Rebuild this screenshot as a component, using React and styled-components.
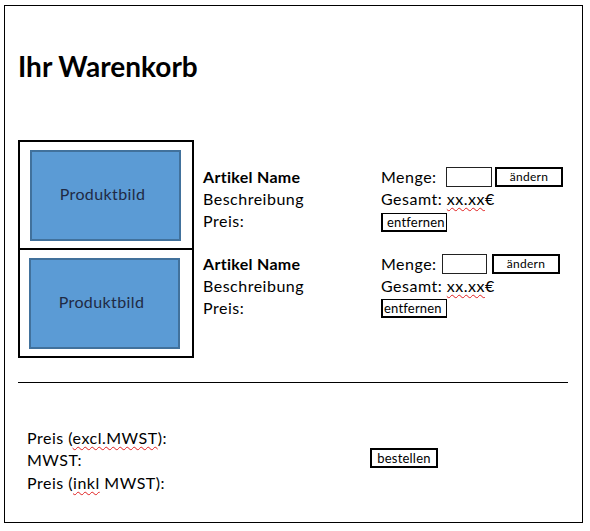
import React from "react";
import styled, { createGlobalStyle } from "styled-components";

const GlobalStyle = createGlobalStyle`
  body {
    margin: 0;
    background: #fff;
    font-family: "Lato", "Liberation Sans", sans-serif;
    color: #000;
  }
`;

const Page = styled.div`
  padding: 5px 0 0 4px;
`;

const Frame = styled.div`
  box-sizing: border-box;
  width: 579px;
  height: 518px;
  border: 1px solid #000;
  padding: 0 14px 0 13px;
`;

const Title = styled.h1`
  margin: 44px 0 0;
  font-size: 28px;
  line-height: 1.2;
  font-weight: 700;
`;

const CartSection = styled.div`
  display: flex;
  margin-top: 56px;
`;

const ImageStack = styled.div`
  box-sizing: border-box;
  width: 176px;
  border: 2px solid #000;
`;

const ImageCell = styled.div`
  padding: 8px 10px 7px;
  & + & {
    border-top: 2px solid #000;
    padding-left: 9px;
  }
`;

const ProductImage = styled.div`
  box-sizing: border-box;
  width: 151px;
  height: 91px;
  padding: 0 6px 4px 0;
  background: #5b9bd5;
  border: 2px solid #41719c;
  display: flex;
  align-items: center;
  justify-content: center;
  color: #1f2a44;
  font-size: 16px;
  letter-spacing: 0.4px;
`;

const DetailsList = styled.div`
  display: flex;
  flex-direction: column;
  gap: 21px;
  margin: 26px 0 0 9px;
  font-size: 16px;
  letter-spacing: 0.5px;
  line-height: 22px;
`;

const ItemDetail = styled.div`
  display: flex;
`;

const Info = styled.div`
  width: 178px;
  display: flex;
  flex-direction: column;
`;

const Name = styled.span`
  font-weight: 700;
  letter-spacing: 0.3px;
`;

const Actions = styled.div`
  display: flex;
  flex-direction: column;
`;

const QtyRow = styled.div`
  display: flex;
  align-items: flex-start;
  height: 22px;
`;

const QtyLabel = styled.span`
  width: ${(p) => p.$width}px;
`;

const QtyInput = styled.div`
  box-sizing: border-box;
  width: ${(p) => p.$width}px;
  height: 20px;
  margin-top: ${(p) => p.$offset}px;
  border: 1px solid #222;
`;

const SmallButton = styled.div`
  box-sizing: border-box;
  height: 20px;
  width: 68px;
  margin: ${(p) => p.$offset}px 0 0 ${(p) => p.$gap}px;
  border: 2px solid #000;
  font-size: 12px;
  letter-spacing: 0.3px;
  line-height: 16px;
  text-align: center;
`;

const Misspelled = styled.span`
  text-decoration: underline wavy #e02020;
  text-decoration-thickness: 1px;
  text-underline-offset: 2px;
`;

const RemoveRow = styled.div`
  height: 22px;
`;

const RemoveButton = styled.div`
  box-sizing: border-box;
  width: 66px;
  height: 19px;
  margin-top: ${(p) => p.$offset}px;
  border: 1px solid #000;
  border-left-width: 2px;
  border-bottom-width: 2px;
  padding-left: ${(p) => p.$pad}px;
  font-size: 13px;
  letter-spacing: 0.2px;
  line-height: 16px;
`;

const Rule = styled.hr`
  margin: 24px 0 0;
  border: none;
  border-top: 1px solid #000;
`;

const Totals = styled.div`
  display: flex;
  align-items: center;
  margin: 44px 0 0 9px;
`;

const TotalLabels = styled.div`
  width: 343px;
  display: flex;
  flex-direction: column;
  font-size: 16px;
  letter-spacing: 0.5px;
  line-height: 22.5px;
`;

const OrderButton = styled.div`
  box-sizing: border-box;
  width: 68px;
  height: 20px;
  margin-bottom: 5px;
  border: 2px solid #000;
  font-size: 13px;
  letter-spacing: 0.2px;
  line-height: 16px;
  text-align: center;
`;

const items = [
  { labelWidth: 65, inputWidth: 46, gap: 3, qtyOffset: 1, removeOffset: 3, pad: 4 },
  { labelWidth: 61, inputWidth: 45, gap: 5, qtyOffset: 1, removeOffset: 2, pad: 1 },
];

export default function App() {
  return (
    <Page>
      <GlobalStyle />
      <Frame>
        <Title>Ihr Warenkorb</Title>
        <CartSection>
          <ImageStack>
            {items.map((_, i) => (
              <ImageCell key={i}>
                <ProductImage>Produktbild</ProductImage>
              </ImageCell>
            ))}
          </ImageStack>
          <DetailsList>
            {items.map((item, i) => (
              <ItemDetail key={i}>
                <Info>
                  <Name>Artikel Name</Name>
                  <span>Beschreibung</span>
                  <span>Preis:</span>
                </Info>
                <Actions>
                  <QtyRow>
                    <QtyLabel $width={item.labelWidth}>Menge:</QtyLabel>
                    <QtyInput $width={item.inputWidth} $offset={item.qtyOffset} />
                    <SmallButton $gap={item.gap} $offset={item.qtyOffset}>
                      ändern
                    </SmallButton>
                  </QtyRow>
                  <span>
                    Gesamt: <Misspelled>xx.xx</Misspelled>€
                  </span>
                  <RemoveRow>
                    <RemoveButton $offset={item.removeOffset} $pad={item.pad}>
                      entfernen
                    </RemoveButton>
                  </RemoveRow>
                </Actions>
              </ItemDetail>
            ))}
          </DetailsList>
        </CartSection>
        <Rule />
        <Totals>
          <TotalLabels>
            <span>
              Preis (<Misspelled>excl.MWST</Misspelled>):
            </span>
            <span>MWST:</span>
            <span>
              Preis (<Misspelled>inkl</Misspelled> MWST):
            </span>
          </TotalLabels>
          <OrderButton>bestellen</OrderButton>
        </Totals>
      </Frame>
    </Page>
  );
}
